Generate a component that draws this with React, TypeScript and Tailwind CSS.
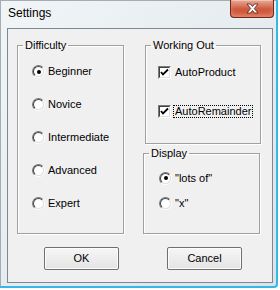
import React from 'react';

const difficulties = ['Beginner', 'Novice', 'Intermediate', 'Advanced', 'Expert'];

function Radio({ checked }: { checked?: boolean }) {
  return (
    <span className="w-[13px] h-[13px] shrink-0 rounded-full border border-t-[#7b7b7b] border-l-[#7b7b7b] border-b-[#ffffff] border-r-[#ffffff] bg-[#e4e4e4] flex items-center justify-center">
      <span className="w-[11px] h-[11px] rounded-full border border-t-[#404040] border-l-[#404040] border-b-[#e0e0e0] border-r-[#e0e0e0] bg-white flex items-center justify-center">
        {checked && <span className="w-[4px] h-[4px] rounded-full bg-black" />}
      </span>
    </span>
  );
}

function Check() {
  return (
    <span className="w-[13px] h-[13px] shrink-0 border border-t-[#7b7b7b] border-l-[#7b7b7b] border-b-[#ffffff] border-r-[#ffffff] bg-[#e4e4e4] flex">
      <span className="flex-1 border border-t-[#404040] border-l-[#404040] border-b-[#e0e0e0] border-r-[#e0e0e0] bg-white flex items-center justify-center">
        <svg width="9" height="9" viewBox="0 0 9 9">
          <path d="M1 4 L3 6.5 L8 1.5" fill="none" stroke="#000" strokeWidth="1.8" />
        </svg>
      </span>
    </span>
  );
}

function Group({ title, className, children }: { title: string; className: string; children: React.ReactNode }) {
  return (
    <fieldset className={`border border-[#a0a0a0] shadow-[inset_1px_1px_0_#fff,1px_1px_0_#fff] ${className}`}>
      <legend className="ml-[5px] px-[2px] text-[11px] leading-[13px] text-black">{title}</legend>
      {children}
    </fieldset>
  );
}

function Button({ label }: { label: string }) {
  return (
    <button className="w-[75px] h-[23px] rounded-[2px] border border-[#707070] bg-gradient-to-b from-[#f6f6f6] to-[#e4e4e4] shadow-[inset_0_0_0_1px_#fcfcfc] text-[11px] text-black">
      {label}
    </button>
  );
}

export default function App() {
  return (
    <div className="w-[280px] h-[290px] bg-white font-['Liberation_Sans',Arial,sans-serif]">
      <div className="w-[278px] h-[288px] flex flex-col border-r-2 border-b-2 border-[#38b6e8] rounded-br-[4px] bg-gradient-to-br from-[#f1f5f7] via-[#e6ecef] to-[#dbe3e8] shadow-[inset_1px_1px_0_#a3adb4]">
        {/* title bar */}
        <div className="h-[28px] flex items-start">
          <span className="pl-[8px] pt-[6px] text-[12px] leading-[15px] text-black">Settings</span>
          <div className="ml-auto mr-[2px] w-[44px] h-[18px] rounded-b-[4px] border border-t-0 border-[#6b2a1f] bg-gradient-to-b from-[#e8ab9a] via-[#cf5d42] to-[#c0432a] shadow-[inset_0_-3px_4px_#e9866a,inset_0_1px_0_#f3c6b9] flex items-center justify-center">
            <svg width="13" height="11" viewBox="0 0 13 11">
              <path
                d="M1 1 H4.5 L6.5 3.5 L8.5 1 H12 L8.3 5.5 L12 10 H8.5 L6.5 7.5 L4.5 10 H1 L4.7 5.5 Z"
                fill="#fff"
                stroke="#5a2a22"
                strokeWidth="0.9"
                strokeLinejoin="round"
              />
            </svg>
          </div>
        </div>

        {/* client area */}
        <div className="ml-[7px] w-[266px] h-[255px] border border-[#7d8990] bg-[#f0f0f0] flex flex-col pt-[10px] pl-[9px]">
          <div className="flex items-start">
            <Group title="Difficulty" className="w-[107px] h-[195px]">
              <div className="flex flex-col pt-[3px] pl-[14px]">
                {difficulties.map((d, i) => (
                  <div key={d} className="h-[33px] flex items-center gap-[3px] text-[11px] text-black">
                    <Radio checked={i === 0} />
                    <span>{d}</span>
                  </div>
                ))}
              </div>
            </Group>

            <div className="ml-[19px] flex flex-col">
              <Group title="Working Out" className="ml-[2px] w-[116px] h-[105px]">
                <div className="flex flex-col gap-[19px] pt-[10px] pl-[12px] text-[11px] text-black">
                  <div className="h-[20px] flex items-center gap-[3px]">
                    <Check />
                    <span className="px-[1px]">AutoProduct</span>
                  </div>
                  <div className="h-[20px] flex items-center gap-[3px]">
                    <Check />
                    <span className="px-[1px] leading-[11px] outline-1 outline-dotted outline-black">AutoRemainder</span>
                  </div>
                </div>
              </Group>

              <Group title="Display" className="mt-[3px] w-[117px] h-[87px]">
                <div className="flex flex-col gap-[5px] pt-[8px] pl-[15px] text-[11px] text-black">
                  <div className="h-[20px] flex items-center gap-[3px]">
                    <Radio checked />
                    <span>"lots of"</span>
                  </div>
                  <div className="h-[20px] flex items-center gap-[3px]">
                    <Radio />
                    <span>"x"</span>
                  </div>
                </div>
              </Group>
            </div>
          </div>

          <div className="mt-[13px] pl-[27px] flex gap-[48px]">
            <Button label="OK" />
            <Button label="Cancel" />
          </div>
        </div>
      </div>
    </div>
  );
}
